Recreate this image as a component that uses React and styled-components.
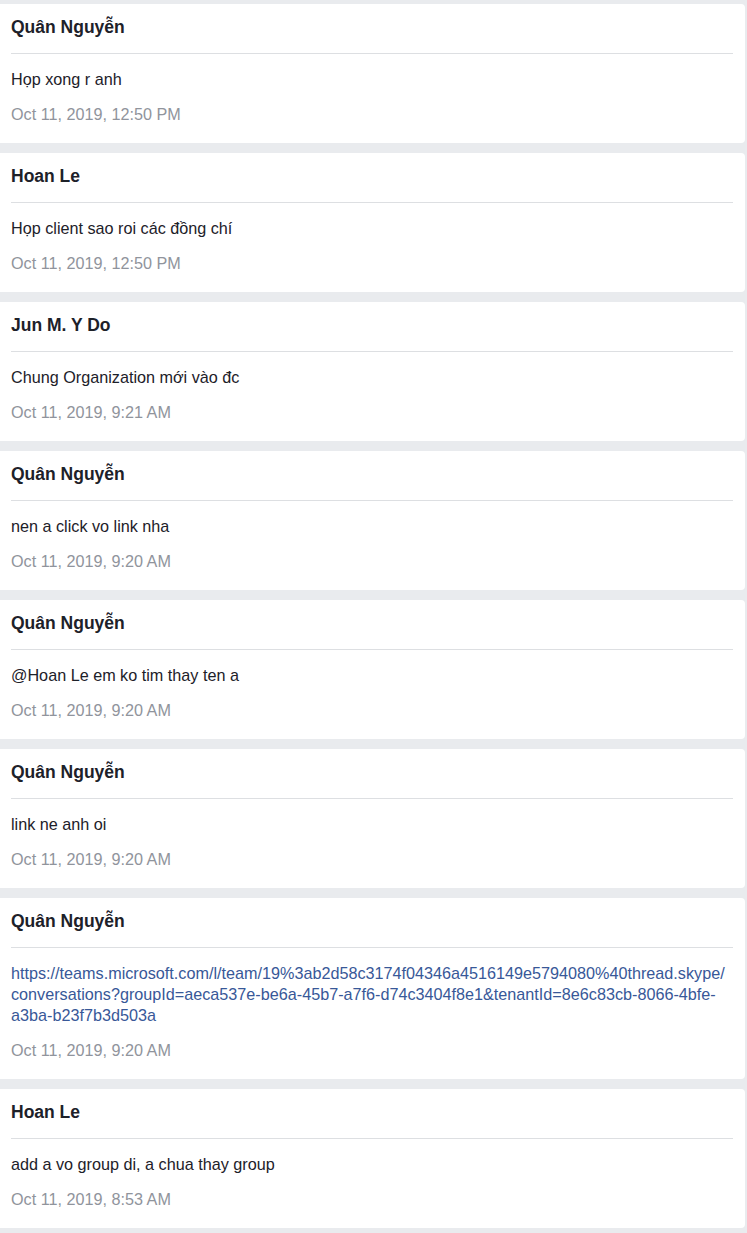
import React from 'react';
import styled, { createGlobalStyle } from 'styled-components';

const messages = [
  { id: 1, author: 'Quân Nguyễn', text: 'Họp xong r anh', date: 'Oct 11, 2019, 12:50 PM' },
  { id: 2, author: 'Hoan Le', text: 'Họp client sao roi các đồng chí', date: 'Oct 11, 2019, 12:50 PM' },
  { id: 3, author: 'Jun M. Y Do', text: 'Chung Organization mới vào đc', date: 'Oct 11, 2019, 9:21 AM' },
  { id: 4, author: 'Quân Nguyễn', text: 'nen a click vo link nha', date: 'Oct 11, 2019, 9:20 AM' },
  { id: 5, author: 'Quân Nguyễn', text: '@Hoan Le em ko tim thay ten a', date: 'Oct 11, 2019, 9:20 AM' },
  { id: 6, author: 'Quân Nguyễn', text: 'link ne anh oi', date: 'Oct 11, 2019, 9:20 AM' },
  {
    id: 7,
    author: 'Quân Nguyễn',
    link: [
      'https://teams.microsoft.com/l/team/19%3ab2d58c3174f04346a4516149e5794080%40thread.skype/',
      'conversations?groupId=aeca537e-be6a-45b7-a7f6-d74c3404f8e1&tenantId=8e6c83cb-8066-4bfe-',
      'a3ba-b23f7b3d503a',
    ],
    date: 'Oct 11, 2019, 9:20 AM',
  },
  { id: 8, author: 'Hoan Le', text: 'add a vo group di, a chua thay group', date: 'Oct 11, 2019, 8:53 AM' },
];

function App() {
  return (
    <>
      <GlobalStyle />
      <List>
        {messages.map((m) => (
          <Card key={m.id}>
            <Author>{m.author}</Author>
            <Divider />
            {m.link ? (
              <Body>
                <Link href={m.link.join('')}>
                  {m.link.map((line, i) => (
                    <React.Fragment key={i}>
                      {line}
                      {i < m.link.length - 1 && <br />}
                    </React.Fragment>
                  ))}
                </Link>
              </Body>
            ) : (
              <Body>{m.text}</Body>
            )}
            <DateText>{m.date}</DateText>
          </Card>
        ))}
      </List>
    </>
  );
}

export default App;

const GlobalStyle = createGlobalStyle`
  body {
    margin: 0;
    background: #e9ebee;
    font-family: "Liberation Sans", Arial, sans-serif;
  }
`;

const List = styled.div`
  display: flex;
  flex-direction: column;
  gap: 10px;
  padding: 4px 2px 4px 0;
`;

const Card = styled.div`
  background: #fff;
  border-radius: 0 4px 4px 0;
  padding: 13px 12px 19px 11px;
`;

const Author = styled.div`
  font-size: 17.5px;
  line-height: 20px;
  font-weight: bold;
  color: #1d2129;
`;

const Divider = styled.hr`
  border: none;
  border-top: 1px solid #dddfe2;
  margin: 16px 0 15px;
`;

const Body = styled.div`
  font-size: 16.2px;
  line-height: 21px;
  color: #1d2129;
`;

const Link = styled.a`
  color: #385898;
  text-decoration: none;
`;

const DateText = styled.div`
  margin-top: 15px;
  font-size: 16.2px;
  line-height: 19px;
  color: #90949c;
`;
